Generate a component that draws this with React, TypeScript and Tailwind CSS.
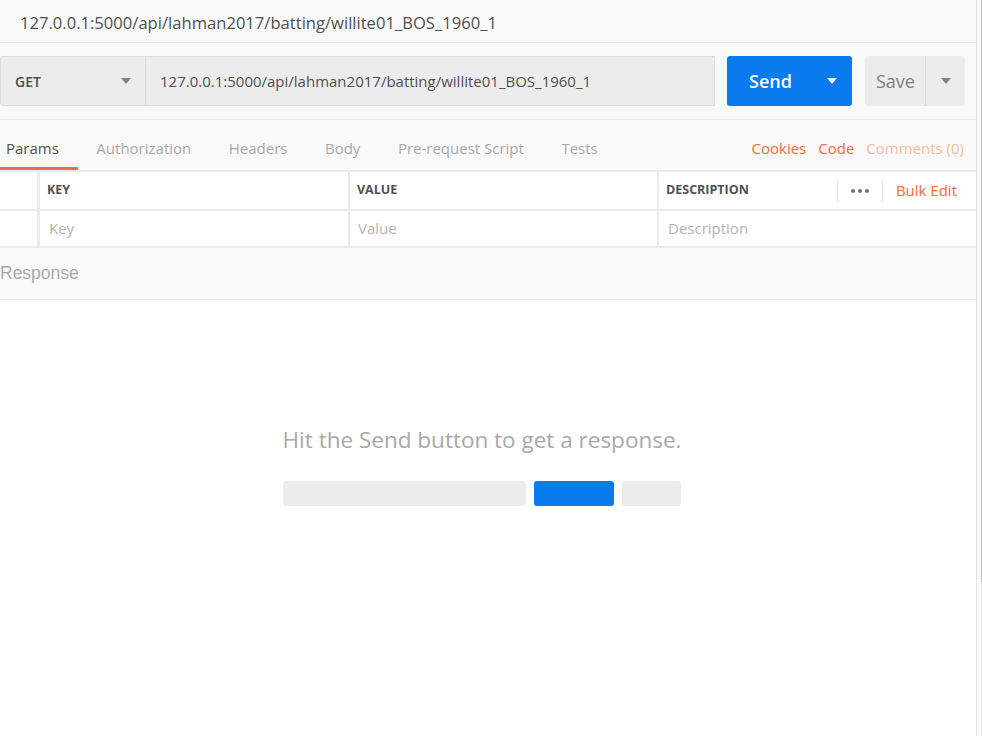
const url = "127.0.0.1:5000/api/lahman2017/batting/willite01_BOS_1960_1";

const tabs = ["Params", "Authorization", "Headers", "Body", "Pre-request Script", "Tests"];

function Caret({ className }: { className: string }) {
  return (
    <svg width="10" height="6" viewBox="0 0 10 6" className={className}>
      <path d="M0 0h10L5 6z" fill="currentColor" />
    </svg>
  );
}

export default function App() {
  return (
    <div className="flex h-[736px] w-[982px] overflow-hidden bg-white font-['Open_Sans',sans-serif]">
      <div className="flex w-[977px] flex-col border-r border-[#e4e4e4]">
        {/* request name */}
        <div className="flex h-[43px] items-center border-b border-[#e6e6e6] bg-[#f9f9f9] pl-[20px] pt-[5px] text-[16.6px] text-[#505050]">
          {url}
        </div>

        {/* url bar */}
        <div className="flex h-[77px] items-center border-b border-[#e6e6e6] bg-[#f9f9f9] pr-[11px]">
          <div className="flex h-[50px] flex-1 rounded-l-[3px] border border-[#dcdcdc] bg-[#ececec]">
            <div className="flex w-[145px] items-center justify-between border-r border-[#dcdcdc] pl-[14px] pr-[14px] text-[14px] font-semibold text-[#505050]">
              GET
              <Caret className="text-[#808080]" />
            </div>
            <div className="flex flex-1 items-center pl-[14px] text-[15px] text-[#505050]">{url}</div>
          </div>
          <div className="ml-[12px] flex h-[50px] w-[125px] items-center justify-between rounded-[3px] bg-[#097bed] pl-[22px] pr-[15px] text-[18px] font-semibold text-white">
            Send
            <Caret className="text-white" />
          </div>
          <div className="ml-[13px] flex h-[50px] w-[100px] rounded-[3px] bg-[#ececec] text-[18px] text-[#808080]">
            <div className="flex w-[61px] items-center border-r border-[#dcdcdc] pl-[11px]">Save</div>
            <div className="flex flex-1 items-center justify-center">
              <Caret className="text-[#808080]" />
            </div>
          </div>
        </div>

        {/* tabs */}
        <div className="flex h-[50px] items-stretch bg-[#f9f9f9] pr-[12px] text-[15px]">
          <div className="flex flex-1">
            {tabs.map((t, i) => (
              <div
                key={t}
                className={
                  i === 0
                    ? "flex items-center border-b-[3px] border-[#f26b3a] pl-[6px] pr-[19px] pt-[10px] text-[#505050]"
                    : "ml-[18.5px] flex items-center pr-[19px] pt-[10px] pb-[3px] text-[#a9a9a9]"
                }
              >
                {t}
              </div>
            ))}
          </div>
          <div className="flex items-center gap-[12px] pt-[10px] pb-[3px] text-[#f26b3a]">
            <span>Cookies</span>
            <span>Code</span>
            <span className="text-[#f7bca6]">Comments (0)</span>
          </div>
        </div>

        {/* params table */}
        <div className="bg-[#f9f9f9]">
          <div className="grid grid-cols-[40px_310px_309px_1fr] border-t-2 border-b-2 border-[#ebebeb] bg-white text-[12.5px] font-bold text-[#505050]">
            <div className="h-[37px] border-r-[3px] border-[#ebebeb]" />
            <div className="flex items-center border-r-2 border-[#ebebeb] pl-[7px]">KEY</div>
            <div className="flex items-center border-r-2 border-[#ebebeb] pl-[7px]">VALUE</div>
            <div className="flex items-center pl-[7px]">
              <span className="flex-1">DESCRIPTION</span>
              <div className="flex h-[24px] w-[46px] items-center justify-center gap-[3px] border-x border-[#e6e6e6]">
                <span className="h-[4px] w-[4px] rounded-full bg-[#707070]" />
                <span className="h-[4px] w-[4px] rounded-full bg-[#707070]" />
                <span className="h-[4px] w-[4px] rounded-full bg-[#707070]" />
              </div>
              <span className="pl-[13px] pr-[19px] text-[15px] font-normal text-[#f26b3a]">Bulk Edit</span>
            </div>
          </div>
          <div className="grid grid-cols-[40px_310px_309px_1fr] border-b-2 border-[#ebebeb] bg-white text-[15px] text-[#b3b3b3]">
            <div className="h-[35px] border-r-[3px] border-[#ebebeb]" />
            <div className="flex items-center border-r-2 border-[#ebebeb] pl-[9px]">Key</div>
            <div className="flex items-center border-r-2 border-[#ebebeb] pl-[8px]">Value</div>
            <div className="flex items-center pl-[9px]">Description</div>
          </div>
        </div>

        {/* response header */}
        <div className="flex h-[52px] items-center border-b border-[#e6e6e6] bg-[#f9f9f9] font-['Liberation_Sans',sans-serif] text-[17.5px] text-[#a9a9a9]">
          Response
        </div>

        {/* empty state */}
        <div className="flex flex-1 flex-col items-center pt-[123px]">
          <div className="pr-[12px] text-[22.5px] text-[#a9a9a9]">Hit the Send button to get a response.</div>
          <div className="mt-[24px] flex gap-[8px] pr-[12px]">
            <div className="h-[25px] w-[243px] rounded-[3px] bg-[#ececec]" />
            <div className="h-[25px] w-[80px] rounded-[3px] bg-[#097bed]" />
            <div className="h-[25px] w-[59px] rounded-[3px] bg-[#ececec]" />
          </div>
        </div>
      </div>

      {/* scrollbar strip */}
      <div className="flex w-[5px] justify-end bg-[#fafafa]">
        <div className="flex w-[1px] flex-col">
          <div className="h-[582px] bg-[#c2c2c2]" />
          <div className="flex-1 bg-[#e8e8e8]" />
        </div>
      </div>
    </div>
  );
}
